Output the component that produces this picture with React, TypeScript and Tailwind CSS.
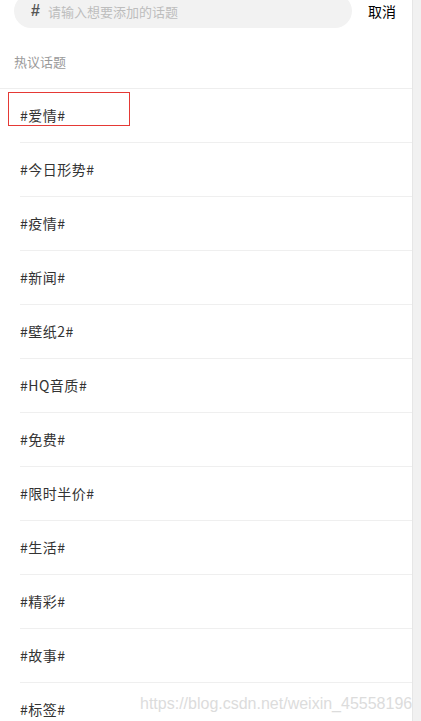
const TOPICS = ['爱情', '今日形势', '疫情', '新闻', '壁纸2', 'HQ音质', '免费', '限时半价', '生活', '精彩', '故事', '标签'];

export default function App() {
  return (
    <div className="relative flex h-[721px] w-full overflow-hidden bg-white font-['Noto_Sans_CJK_SC',sans-serif]">
      <div className="flex-1 min-w-0">
        {/* Search header */}
        <div className="flex items-center pl-[14px] -mt-[6px]">
          <div className="flex h-[34px] w-[338px] items-center rounded-full bg-[#f2f2f2] pl-[17px]">
            <span className="text-[16px] leading-none font-bold text-[#555] font-['Liberation_Sans',sans-serif]">#</span>
            <span className="ml-[8px] text-[13px] leading-none text-[#bdbdbd]">请输入想要添加的话题</span>
          </div>
          <button className="ml-[16px] text-[14px] leading-none text-black">取消</button>
        </div>

        {/* Title */}
        <div className="mt-[24px] border-b border-[#eeeeee] pb-[16px] pl-[14px]">
          <div className="text-[13px] leading-[20px] text-[#9a9a9a]">热议话题</div>
        </div>

        {/* Topic list */}
        <ul className="ml-[20px]">
          {TOPICS.map((t) => (
            <li key={t} className="flex h-[54px] items-center border-b border-[#efefef] text-[14px] tracking-[0.5px] text-[#333]">
              #{t}#
            </li>
          ))}
        </ul>
      </div>

      {/* Scrollbar track */}
      <div className="w-[9px] shrink-0 bg-[#f1f1f1] border-l border-[#e6e6e6]" />

      {/* Selection highlight */}
      <div className="absolute left-[8px] top-[92px] h-[34px] w-[122px] border border-[#e53935]" />

      {/* Watermark */}
      <div className="pointer-events-none absolute left-[140px] top-[692px] text-[16px] text-[#dcdcdc] font-['Liberation_Sans',sans-serif]">
        https://blog.csdn.net/weixin_45558196
      </div>
    </div>
  );
}
